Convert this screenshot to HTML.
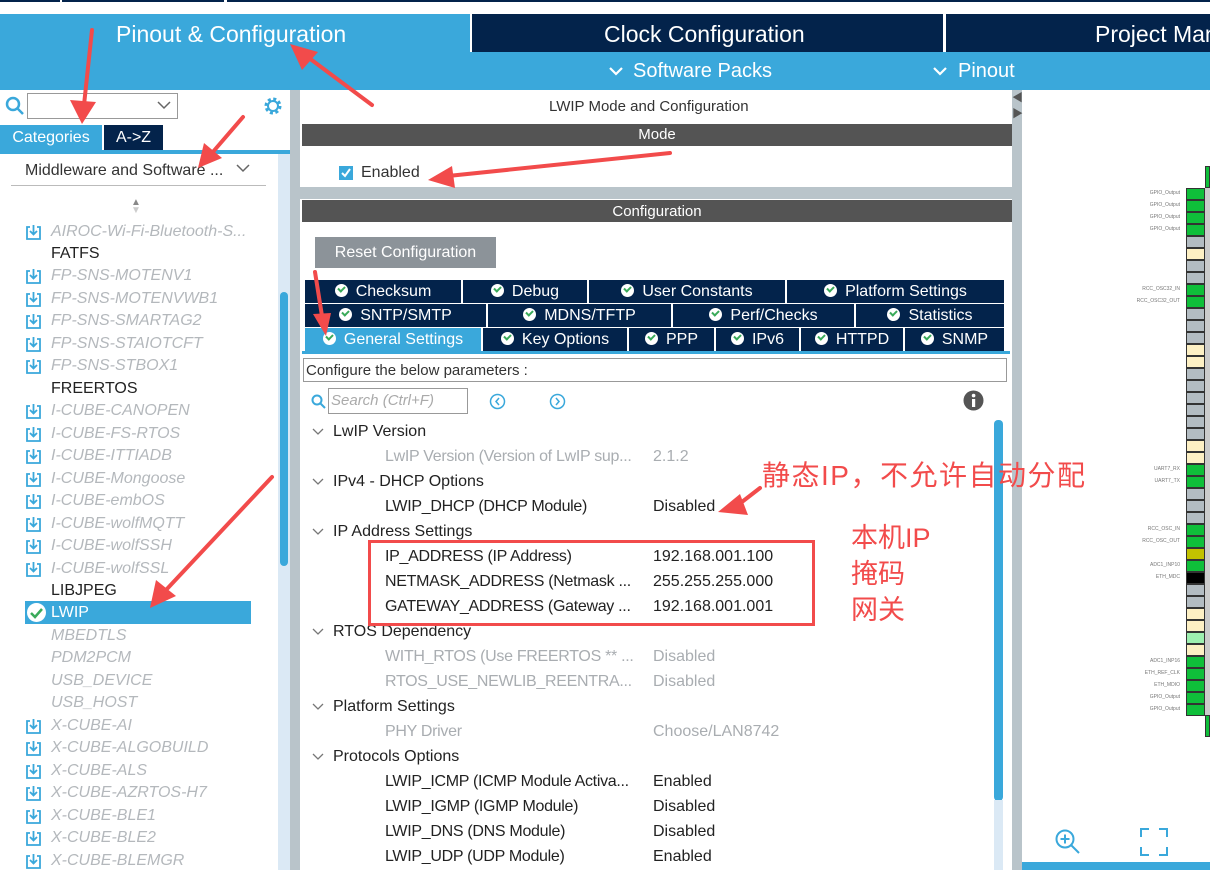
<!DOCTYPE html>
<html><head><meta charset="utf-8">
<style>
*{margin:0;padding:0;box-sizing:border-box}
body{width:1210px;height:870px;overflow:hidden;background:#fff;font-family:"Liberation Sans","Noto Sans CJK SC",sans-serif;position:relative}
.a{position:absolute}
.t{position:absolute;white-space:nowrap}
.li{position:absolute;left:25px;font-size:16px;height:22px;line-height:22px;white-space:nowrap}
.li.g{color:#b4b8bc;font-style:italic;left:51px}
.li.b{color:#222;left:51px}
.ic{position:absolute;left:-26px;top:3px;width:17px;height:17px}
.tab{position:absolute;height:23px;background:#03234b;color:#fff;font-size:16px;line-height:23px;text-align:center;border-right:2px solid #fff}
.ck{display:inline-block;width:13px;height:13px;border-radius:50%;background:#fff;vertical-align:-1px;margin-right:8px;position:relative}
.ck:after{content:"";position:absolute;left:3px;top:2px;width:5px;height:3px;border-left:2px solid #3aaa5a;border-bottom:2px solid #3aaa5a;transform:rotate(-45deg)}
.r{position:absolute;font-size:16px;white-space:nowrap;color:#222;height:25px;line-height:25px}
.r.g{color:#a9adb1}
.cv{position:absolute;left:-21px;top:9px;width:12px;height:8px}
.pins{position:absolute;left:1186px;top:188px;width:19px}
.pins div{height:12px;border:1px solid #333;margin-bottom:0;font-size:4px;color:#fff}
</style></head><body>
<div class="a" style="left:0;top:0;width:60px;height:2px;background:#03234b"></div>
<div class="a" style="left:62px;top:0;width:162px;height:2px;background:#03234b"></div>
<div class="a" style="left:227px;top:0;width:983px;height:2px;background:#03234b"></div>
<div class="a" style="left:0;top:14px;width:470px;height:38px;background:#3aa8db"></div>
<div class="t" style="left:116px;top:21px;font-size:23px;color:#fff">Pinout &amp; Configuration</div>
<div class="a" style="left:472px;top:14px;width:471px;height:38px;background:#03234b"></div>
<div class="t" style="left:604px;top:21px;font-size:23px;color:#fff">Clock Configuration</div>
<div class="a" style="left:946px;top:14px;width:264px;height:38px;background:#03234b"></div>
<div class="t" style="left:1095px;top:21px;font-size:23px;color:#fff">Project Man</div>
<div class="a" style="left:0;top:52px;width:1210px;height:38px;background:#3aa8db"></div>
<svg class="a" style="left:608px;top:66px" width="16" height="10"><path d="M2 2 L8 8 L14 2" fill="none" stroke="#fff" stroke-width="2.2"/></svg>
<div class="t" style="left:633px;top:60px;font-size:20px;color:#fff">Software Packs</div>
<svg class="a" style="left:932px;top:66px" width="16" height="10"><path d="M2 2 L8 8 L14 2" fill="none" stroke="#fff" stroke-width="2.2"/></svg>
<div class="t" style="left:958px;top:60px;font-size:20px;color:#fff">Pinout</div>

<svg class="a" style="left:5px;top:96px" width="20" height="20"><circle cx="8" cy="8" r="6" fill="none" stroke="#3aa8db" stroke-width="2.5"/><line x1="12" y1="12" x2="18" y2="18" stroke="#3aa8db" stroke-width="2.5"/></svg>
<div class="a" style="left:27px;top:93px;width:151px;height:26px;border:1px solid #999"></div>
<svg class="a" style="left:157px;top:101px" width="14" height="9"><path d="M1 1 L7 7 L13 1" fill="none" stroke="#666" stroke-width="1.5"/></svg>
<svg class="a" style="left:262px;top:95px" width="22" height="22"><circle cx="11" cy="11" r="7" fill="none" stroke="#3aa8db" stroke-width="3" stroke-dasharray="3 2.5"/><circle cx="11" cy="11" r="5" fill="none" stroke="#3aa8db" stroke-width="2"/></svg>
<div class="a" style="left:0;top:125px;width:102px;height:27px;background:#3aa8db;color:#fff;font-size:16px;line-height:26px;text-align:center">Categories</div>
<div class="a" style="left:104px;top:125px;width:59px;height:27px;background:#03234b;color:#fff;font-size:16px;line-height:26px;text-align:center">A-&gt;Z</div>
<div class="a" style="left:0;top:150px;width:290px;height:4px;background:#3aa8db"></div>
<div class="t" style="left:25px;top:162px;font-size:16px;color:#333">Middleware and Software ...</div>
<svg class="a" style="left:236px;top:164px" width="14" height="9"><path d="M1 1 L7 7 L13 1" fill="none" stroke="#666" stroke-width="1.5"/></svg>
<div class="a" style="left:11px;top:185px;width:255px;height:1px;background:#bbb"></div>
<div class="t" style="left:131px;top:199px;font-size:10px;color:#888;line-height:8px">&#9650;<br><span style="color:#ccc">&#9660;</span></div>
<div class="a" style="left:278px;top:154px;width:12px;height:716px;background:#dbe9f5"></div>
<div class="a" style="left:280px;top:292px;width:8px;height:274px;background:#3aa8db;border-radius:4px"></div>
<div class="a" style="left:290px;top:90px;width:10px;height:780px;background:#b9c4ca"></div>

<div id="list"></div>
<div class="a" style="left:25px;top:601px;width:226px;height:23px;background:#3aa8db"></div>
<svg class="a" style="left:26px;top:602px" width="21" height="21"><circle cx="10.5" cy="10.5" r="9.5" fill="#fff"/><path d="M5 11 L9 15 L16 7" fill="none" stroke="#3aaa5a" stroke-width="2.5"/></svg>
<div class="t" style="left:51px;top:602px;font-size:16px;color:#fff;line-height:22px">LWIP</div>

<div class="t" style="left:549px;top:98px;font-size:15px;color:#333">LWIP Mode and Configuration</div>
<div class="a" style="left:302px;top:124px;width:710px;height:22px;background:#545454;color:#fff;font-size:15px;line-height:22px;text-align:center">Mode</div>
<div class="a" style="left:339px;top:166px;width:14px;height:14px;background:#3aa8db"></div>
<svg class="a" style="left:339px;top:166px" width="14" height="14"><path d="M3 7 L6 10 L11 3" fill="none" stroke="#fff" stroke-width="2"/></svg>
<div class="t" style="left:361px;top:164px;font-size:16px;color:#333">Enabled</div>
<div class="a" style="left:300px;top:187px;width:712px;height:12px;background:#b9c4ca"></div>
<div class="a" style="left:302px;top:200px;width:710px;height:22px;background:#545454;color:#fff;font-size:15px;line-height:24px;text-align:center">Configuration</div>
<div class="a" style="left:315px;top:237px;width:181px;height:31px;background:#8c9399;color:#fff;font-size:16px;line-height:31px;text-align:center">Reset Configuration</div>

<div class="tab" style="left:305px;top:280px;width:158px"><span class="ck"></span>Checksum</div>
<div class="tab" style="left:463px;top:280px;width:126px"><span class="ck"></span>Debug</div>
<div class="tab" style="left:589px;top:280px;width:198px"><span class="ck"></span>User Constants</div>
<div class="tab" style="left:787px;top:280px;width:217px;border:0"><span class="ck"></span>Platform Settings</div>
<div class="tab" style="left:305px;top:304px;width:183px"><span class="ck"></span>SNTP/SMTP</div>
<div class="tab" style="left:488px;top:304px;width:185px"><span class="ck"></span>MDNS/TFTP</div>
<div class="tab" style="left:673px;top:304px;width:183px"><span class="ck"></span>Perf/Checks</div>
<div class="tab" style="left:856px;top:304px;width:148px;border:0"><span class="ck"></span>Statistics</div>
<div class="tab" style="left:305px;top:328px;width:178px;background:#3aa8db"><span class="ck"></span>General Settings</div>
<div class="tab" style="left:483px;top:328px;width:146px"><span class="ck"></span>Key Options</div>
<div class="tab" style="left:629px;top:328px;width:87px"><span class="ck"></span>PPP</div>
<div class="tab" style="left:716px;top:328px;width:85px"><span class="ck"></span>IPv6</div>
<div class="tab" style="left:801px;top:328px;width:104px"><span class="ck"></span>HTTPD</div>
<div class="tab" style="left:905px;top:328px;width:99px;border:0"><span class="ck"></span>SNMP</div>
<div class="a" style="left:302px;top:351px;width:708px;height:3px;background:#3aa8db"></div>
<div class="a" style="left:303px;top:358px;width:704px;height:24px;border:1px solid #999;font-size:15px;line-height:24px;color:#333;padding-left:2px">Configure the below parameters :</div>
<svg class="a" style="left:311px;top:394px" width="15" height="15"><circle cx="6" cy="6" r="4.5" fill="none" stroke="#3aa8db" stroke-width="2"/><line x1="9" y1="9" x2="14" y2="14" stroke="#3aa8db" stroke-width="2"/></svg>
<div class="a" style="left:328px;top:388px;width:140px;height:26px;border:1px solid #999;font-size:15px;line-height:24px;color:#aaa;font-style:italic;padding-left:2px">Search (Ctrl+F)</div>
<svg class="a" style="left:489px;top:393px" width="17" height="17"><circle cx="8.5" cy="8.5" r="7" fill="none" stroke="#3aa8db" stroke-width="1.5"/><path d="M10 5 L7 8.5 L10 12" fill="none" stroke="#3aa8db" stroke-width="1.5"/></svg>
<svg class="a" style="left:549px;top:393px" width="17" height="17"><circle cx="8.5" cy="8.5" r="7" fill="none" stroke="#3aa8db" stroke-width="1.5"/><path d="M7 5 L10 8.5 L7 12" fill="none" stroke="#3aa8db" stroke-width="1.5"/></svg>
<svg class="a" style="left:963px;top:390px" width="21" height="21"><circle cx="10.5" cy="10.5" r="10" fill="#555"/><rect x="9" y="9" width="3.2" height="8" fill="#fff"/><circle cx="10.6" cy="5.6" r="1.8" fill="#fff"/></svg>
<div class="a" style="left:994px;top:420px;width:9px;height:381px;background:#3aa8db;border-radius:4px"></div>
<div class="a" style="left:994px;top:800px;width:9px;height:70px;background:#dbe9f5"></div>

<div id="tree"></div>

<div class="a" style="left:1012px;top:90px;width:10px;height:780px;background:#b9c4ca"></div>
<div class="t" style="left:1012px;top:90px;font-size:11px;color:#555;line-height:16px">&#9664;<br>&#9654;</div>
<div class="a" style="left:1022px;top:862px;width:188px;height:8px;background:#3aa8db"></div>
<svg class="a" style="left:1054px;top:828px" width="28" height="28"><circle cx="11" cy="11" r="8.5" fill="none" stroke="#3aa8db" stroke-width="2"/><line x1="17" y1="17" x2="25" y2="25" stroke="#3aa8db" stroke-width="2"/><line x1="6.5" y1="11" x2="15.5" y2="11" stroke="#3aa8db" stroke-width="2"/><line x1="11" y1="6.5" x2="11" y2="15.5" stroke="#3aa8db" stroke-width="2"/></svg>
<svg class="a" style="left:1140px;top:828px" width="28" height="28"><path d="M1 9 V1 H9 M19 1 H27 V9 M27 19 V27 H19 M9 27 H1 V19" fill="none" stroke="#3aa8db" stroke-width="2"/></svg>
<div class="a" style="left:1205px;top:166px;width:5px;height:22px;background:#0fbf3a;border:1px solid #333"></div>
<div class="a" style="left:1205px;top:188px;width:5px;height:527px;background:#ccc"></div>
<div class="a" style="left:1205px;top:715px;width:5px;height:22px;background:#0fbf3a;border:1px solid #333"></div>
<div class="pins" id="pins"></div>

<div class="a" style="left:368px;top:540px;width:447px;height:86px;border:3px solid #f24b4b"></div>
<div class="t" style="left:762px;top:454px;font-size:28px;letter-spacing:1.5px;color:#f24b4b">静态IP，不允许自动分配</div>
<div class="t" style="left:851px;top:520px;font-size:27px;color:#f24b4b;line-height:36px;white-space:normal;width:120px">本机IP<br>掩码<br>网关</div>
<svg class="a" style="left:0;top:0" width="1210" height="870">
<g fill="#f24b4b" stroke="#f24b4b" stroke-width="4" stroke-linecap="round">
<line x1="92" y1="30" x2="84" y2="105"/><polygon points="70,100 96,102 82,124" stroke="none"/>
<line x1="372" y1="105" x2="305" y2="55"/><polygon points="290,44 318,52 302,70" stroke="none"/>
<line x1="243" y1="117" x2="212" y2="153"/><polygon points="198,168 204,143 222,158" stroke="none"/>
<line x1="670" y1="153" x2="448" y2="176"/><polygon points="428,180 452,166 455,188" stroke="none"/>
<line x1="315" y1="272" x2="322" y2="316"/><polygon points="326,336 313,314 331,313" stroke="none"/>
<line x1="272" y1="477" x2="166" y2="590"/><polygon points="150,608 156,580 176,596" stroke="none"/>
<line x1="760" y1="488" x2="738" y2="505"/><polygon points="718,512 740,494 748,515" stroke="none"/>
</g></svg>

<script>
var items=[["AIROC-Wi-Fi-Bluetooth-S...",1],["FATFS",0],["FP-SNS-MOTENV1",1],["FP-SNS-MOTENVWB1",1],["FP-SNS-SMARTAG2",1],["FP-SNS-STAIOTCFT",1],["FP-SNS-STBOX1",1],["FREERTOS",0],["I-CUBE-CANOPEN",1],["I-CUBE-FS-RTOS",1],["I-CUBE-ITTIADB",1],["I-CUBE-Mongoose",1],["I-CUBE-embOS",1],["I-CUBE-wolfMQTT",1],["I-CUBE-wolfSSH",1],["I-CUBE-wolfSSL",1],["LIBJPEG",0],["",-1],["MBEDTLS",2],["PDM2PCM",2],["USB_DEVICE",2],["USB_HOST",2],["X-CUBE-AI",1],["X-CUBE-ALGOBUILD",1],["X-CUBE-ALS",1],["X-CUBE-AZRTOS-H7",1],["X-CUBE-BLE1",1],["X-CUBE-BLE2",1],["X-CUBE-BLEMGR",1]];
var h="";var icon='<svg class="ic" viewBox="0 0 17 17"><path d="M5 3 H2 V15 H15 V3 H12" fill="none" stroke="#3aa8db" stroke-width="1.8"/><path d="M8.5 1 V10 M5 7 L8.5 10.5 L12 7" fill="none" stroke="#3aa8db" stroke-width="1.8"/></svg>';
items.forEach(function(it,i){if(it[1]<0)return;var y=220.5+i*22.47;h+='<div class="li '+(it[1]==0?'b':'g')+'" style="top:'+y+'px">'+(it[1]==1?icon:'')+it[0]+'</div>';});
document.getElementById("list").innerHTML=h;
var cv='<svg class="cv" viewBox="0 0 12 8"><path d="M1 1 L6 6 L11 1" fill="none" stroke="#777" stroke-width="1.3"/></svg>';
var rows=[[0,"LwIP Version"],[1,"LwIP Version (Version of LwIP sup...","2.1.2",1],[0,"IPv4 - DHCP Options"],[1,"LWIP_DHCP (DHCP Module)","Disabled"],[0,"IP Address Settings"],[1,"IP_ADDRESS (IP Address)","192.168.001.100"],[1,"NETMASK_ADDRESS (Netmask ...","255.255.255.000"],[1,"GATEWAY_ADDRESS (Gateway ...","192.168.001.001"],[0,"RTOS Dependency"],[1,"WITH_RTOS (Use FREERTOS ** ...","Disabled",1],[1,"RTOS_USE_NEWLIB_REENTRA...","Disabled",1],[0,"Platform Settings"],[1,"PHY Driver","Choose/LAN8742",1],[0,"Protocols Options"],[1,"LWIP_ICMP (ICMP Module Activa...","Enabled"],[1,"LWIP_IGMP (IGMP Module)","Disabled"],[1,"LWIP_DNS (DNS Module)","Disabled"],[1,"LWIP_UDP (UDP Module)","Enabled"]];
var t="";rows.forEach(function(r,i){var y=419+i*25;if(r[0]==0){t+='<div class="r" style="left:333px;top:'+y+'px">'+cv+r[1]+'</div>';}else{var g=r[3]?' g':'';t+='<div class="r'+g+'" style="left:385px;top:'+y+'px;width:264px;overflow:hidden;letter-spacing:-0.3px">'+r[1]+'</div><div class="r'+g+'" style="left:653px;top:'+y+'px">'+r[2]+'</div>';}});
document.getElementById("tree").innerHTML=t;
var G="#0fbf3a",S="#b3bcc2",C="#fdf0c4";
var cols=[G,G,G,G,S,C,S,S,G,G,S,S,S,C,C,S,S,S,S,S,S,C,C,G,G,S,S,S,G,G,"#c2c200",G,"#000",S,S,C,C,"#9ef0b0",C,G,G,G,G,G];
var labels={0:"GPIO_Output",1:"GPIO_Output",2:"GPIO_Output",3:"GPIO_Output",8:"RCC_OSC32_IN",9:"RCC_OSC32_OUT",23:"UART7_RX",24:"UART7_TX",28:"RCC_OSC_IN",29:"RCC_OSC_OUT",31:"ADC1_INP10",32:"ETH_MDC",39:"ADC1_INP16",40:"ETH_REF_CLK",41:"ETH_MDIO",42:"GPIO_Output",43:"GPIO_Output"};
var p="";cols.forEach(function(c,i){p+='<div style="background:'+c+'"></div>';});
document.getElementById("pins").innerHTML=p;
var l="";for(var k in labels){l+='<div class="t" style="left:1130px;width:50px;text-align:right;top:'+(190+k*12)+'px;font-size:5px;color:#777">'+labels[k]+'</div>';}
document.body.insertAdjacentHTML("beforeend",l);
</script>
</body></html>
